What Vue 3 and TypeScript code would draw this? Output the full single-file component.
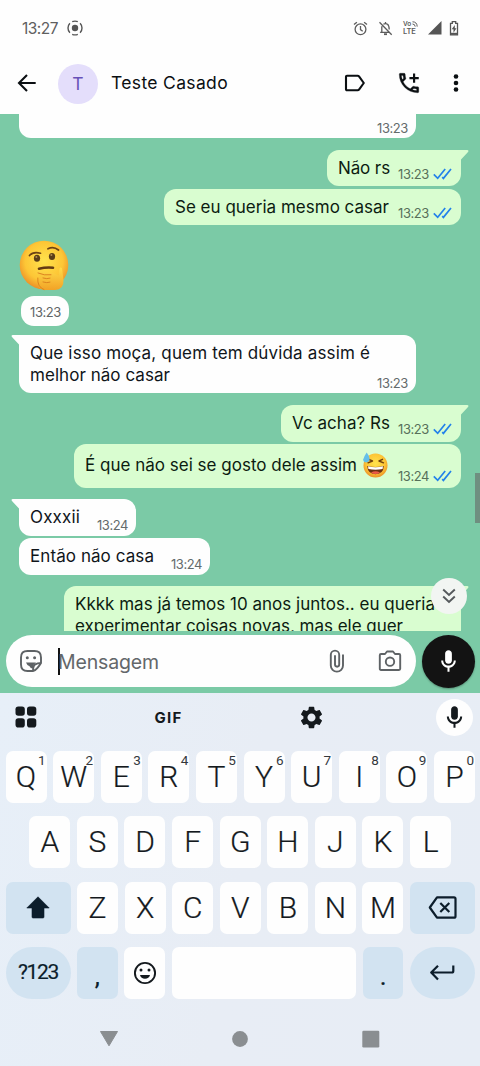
<script setup lang="ts">
interface Line { text: string; width: number }
interface Message {
  side: 'in' | 'out'
  gap: number
  height: number
  width: number
  lines: Line[]
  time?: string
  tail?: boolean
  emoji?: boolean
  padTop: number
  padBottom: number
}

// Tracks a single line of text so that it fills the given width.
const vFit = {
  mounted(el: HTMLElement, binding: { value: number }) {
    const count = (el.textContent ?? '').length
    const natural = el.getBoundingClientRect().width
    el.style.letterSpacing = `${(binding.value - natural) / Math.max(count, 1)}px`
  },
}

const before: Message[] = [
  { side: 'in', gap: 0, height: 24, width: 397, lines: [], time: '13:23', padTop: 0, padBottom: 2 },
  { side: 'out', gap: 12, height: 36, width: 134, lines: [{ text: 'Não rs', width: 52 }], time: '13:23', tail: true, padTop: 7, padBottom: 4 },
  { side: 'out', gap: 3, height: 36, width: 297, lines: [{ text: 'Se eu queria mesmo casar', width: 214 }], time: '13:23', padTop: 7, padBottom: 4 },
]
const after: Message[] = [
  { side: 'in', gap: 9, height: 58, width: 397, lines: [{ text: 'Que isso moça, quem tem dúvida assim é', width: 340 }, { text: 'melhor não casar', width: 140 }], time: '13:23', tail: true, padTop: 7, padBottom: 2 },
  { side: 'out', gap: 12, height: 37, width: 180, lines: [{ text: 'Vc acha? Rs', width: 98 }], time: '13:23', tail: true, padTop: 7, padBottom: 5 },
  { side: 'out', gap: 2, height: 44, width: 387, lines: [{ text: 'É que não sei se gosto dele assim', width: 272 }], time: '13:24', emoji: true, padTop: 10, padBottom: 4 },
  { side: 'in', gap: 11, height: 37, width: 117, lines: [{ text: 'Oxxxii', width: 50 }], time: '13:24', tail: true, padTop: 7, padBottom: 3 },
  { side: 'in', gap: 2, height: 37, width: 191, lines: [{ text: 'Então não casa', width: 124 }], time: '13:24', padTop: 7, padBottom: 3 },
  { side: 'out', gap: 11, height: 90, width: 397, lines: [{ text: 'Kkkk mas já temos 10 anos juntos.. eu queria', width: 360 }, { text: 'experimentar coisas novas, mas ele quer', width: 328 }], tail: true, padTop: 7, padBottom: 4 },
]
const groups = [before, after]

const topRow = 'QWERTYUIOP'.split('').map((label, i) => ({ label, hint: String((i + 1) % 10) }))
const midRow = 'ASDFGHJKL'.split('')
const lowRow = 'ZXCVBNM'.split('')
</script>

<template>
  <div class="phone">
    <div class="status">
      <span class="clock"><span v-fit="36">13:27</span></span>
      <svg class="cast" width="16" height="16" viewBox="0 0 16 16" fill="none" stroke="#555" stroke-width="1.4">
        <circle cx="8" cy="8" r="3.2" fill="#555" stroke="none" />
        <path d="M5.2 1.7A7 7 0 0 1 10.8 1.7M5.2 14.3A7 7 0 0 0 10.8 14.3M2.9 3.2A7 7 0 0 0 2.9 12.8M13.1 3.2A7 7 0 0 1 13.1 12.8" />
      </svg>
      <svg class="alarm" width="15" height="15" viewBox="0 0 15 15" fill="none" stroke="#5c5c5c" stroke-width="1.3">
        <circle cx="7.5" cy="8.3" r="5.4" /><path d="M7.5 5v3.6l2.2 1.6M1 3.6 3.9 1.2M14 3.6 11.1 1.2" />
      </svg>
      <svg class="bell" width="15" height="15" viewBox="0 0 15 15" fill="none" stroke="#5c5c5c" stroke-width="1.3">
        <path d="M1.5 1.2 13.7 13.8M3.8 5.3V11M2.2 11.4h9M5.4 3.2C6.7 2.4 8.3 2.4 9.5 3.2 11 4.2 11.2 5.5 11.2 8.6M7.5 1v2" /><path d="M6 13.2h3" stroke-width="1.8" />
      </svg>
      <div class="volte">
        <div class="vo"><span>Vo</span><svg width="6" height="6" viewBox="0 0 6 6" fill="none" stroke="#5c5c5c" stroke-width="1"><path d="M.5.8Q5 .8 5.2 5.6M.5 3Q3 3 3.2 5.6" /></svg></div>
        <div class="lte">LTE</div>
      </div>
      <svg class="signal" width="14" height="14" viewBox="0 0 14 14"><path d="M13.5 0v13.5H0z" fill="#555" /></svg>
      <svg class="battery" width="10" height="15" viewBox="0 0 10 15"><path d="M1.5 2.3h1.8V.6h3.4v1.7h1.8v11.5h-7z" fill="none" stroke="#555" stroke-width="1.3" /><path d="M5.8 4 2.7 8.3h1.8v3.4l3-4.4H5.8z" fill="#555" /><path d="M1.5 11.8h7v2h-7z" fill="#555" /></svg>
    </div>

    <header class="header">
      <svg class="back" width="20" height="20" viewBox="0 0 20 20" fill="none" stroke="#0b0f12" stroke-width="2.1"><path d="M18.7 10H2.2M10 2 2 10l8 8" /></svg>
      <div class="avatar">T</div>
      <div class="name"><span v-fit="117">Teste Casado</span></div>
      <svg class="label" width="22" height="20" viewBox="0 0 22 20" fill="none" stroke="#0b0f12" stroke-width="2.1" stroke-linejoin="round"><path d="M3 2.8h10.6q1 0 1.6.8l4.6 6.4-4.6 6.4q-.6.8-1.6.8H3q-1 0-1-1V3.8q0-1 1-1z" /></svg>
      <svg class="call" width="26" height="26" viewBox="0 0 24 24" fill="#0b0f12">
        <path d="M6.54 5c.06.89.21 1.76.45 2.59l-1.2 1.2c-.41-1.2-.67-2.47-.76-3.79h1.51m9.86 12.02c.85.24 1.72.39 2.6.45v1.49c-1.32-.09-2.59-.35-3.8-.75l1.2-1.19M7.5 3H4c-.55 0-1 .45-1 1 0 9.39 7.61 17 17 17 .55 0 1-.45 1-1v-3.49c0-.55-.45-1-1-1-1.24 0-2.45-.2-3.57-.57-.1-.04-.21-.05-.31-.05-.26 0-.51.1-.71.29l-2.2 2.2c-2.83-1.45-5.15-3.76-6.59-6.59l2.2-2.2c.28-.28.36-.67.25-1.02C8.7 6.45 8.5 5.25 8.5 4c0-.55-.45-1-1-1z" stroke="#0b0f12" stroke-width=".25" />
        <path d="M15.7 3.2h2v3.3H21v2h-3.3v3.3h-2V8.5h-3.3v-2h3.3z" />
      </svg>
      <svg class="dots" width="6" height="20" viewBox="0 0 6 20" fill="#0b0f12"><circle cx="3" cy="3.5" r="2.3" /><circle cx="3" cy="10" r="2.3" /><circle cx="3" cy="16.5" r="2.3" /></svg>
    </header>

    <main class="chat">
      <template v-for="(group, g) in groups" :key="g">
        <div v-if="g === 1" class="reaction">
          <svg width="50" height="51" viewBox="0 0 50 51">
            <defs>
              <radialGradient id="face" cx=".5" cy=".42" r=".6"><stop offset="0" stop-color="#ffe34d" /><stop offset=".65" stop-color="#fdc636" /><stop offset="1" stop-color="#ea8a26" /></radialGradient>
              <linearGradient id="hand" x1="0" y1="0" x2="0" y2="1"><stop offset="0" stop-color="#ffdc4a" /><stop offset="1" stop-color="#f2a326" /></linearGradient>
            </defs>
            <circle cx="25" cy="25" r="24.3" fill="url(#face)" />
            <g fill="#5b3d18"><ellipse cx="18" cy="18.3" rx="3.1" ry="3.5" /><ellipse cx="33" cy="16.5" rx="3.1" ry="3.5" /></g>
            <circle cx="17.4" cy="17" r="1" fill="#b08a50" /><circle cx="32.4" cy="15" r="1" fill="#b08a50" />
            <path d="M10.500 15.500Q14 11.300 21.500 13.200M29 8.800Q34.500 6 39.500 10" fill="none" stroke="#6c4215" stroke-width="1.7" stroke-linecap="round" />
            <path d="M20 28.700Q27 27 34 27.700" fill="none" stroke="#633b13" stroke-width="2.6" stroke-linecap="round" />
            <path d="M18.500 31.500Q19 30 22 30.600L30 32.500Q34 32 36 34L39.500 35.500 40.500 28.500Q41.500 26.500 43 28.500L44.500 40Q45 49.500 36 50H26Q20 50 19 44L20.500 36.500Q18 34 18.500 31.500z" fill="url(#hand)" />
            <path d="M19 33Q25 35.800 32 34.800M24 38q4 1.300 7 .2M24 42q4 1.300 7 .2M18.800 38Q18 47 25 49.600" fill="none" stroke="#dc8420" stroke-width="1" stroke-linecap="round" />
          </svg>
          <div class="pill"><span v-fit="31">13:23</span></div>
        </div>
        <div
          v-for="(m, i) in group"
          :key="i"
          class="bubble"
          :class="[m.side, { tail: m.tail }]"
          :style="{ marginTop: m.gap + 'px', height: m.height + 'px', width: m.width + 'px', paddingTop: m.padTop + 'px', paddingBottom: m.padBottom + 'px' }"
        >
          <svg v-if="m.tail" class="tip" width="18" height="12" viewBox="0 0 18 12"><path d="M18 0H2Q-.5.3 1.2 2.2L8 9.500V12H18z" fill="currentColor" /></svg>
          <div class="body">
            <div v-for="l in m.lines" :key="l.text" class="line"><span v-fit="l.width">{{ l.text }}</span></div>
          </div>
          <svg v-if="m.emoji" class="grin" width="26" height="26" viewBox="0 0 26 26">
            <circle cx="13.500" cy="13.500" r="12" fill="url(#face)" />
            <path d="M6 10.800 10.500 9 6.800 7.300M20.500 7.300 17 9l4.500 1.800" fill="none" stroke="#70420e" stroke-width="1.400" stroke-linecap="round" stroke-linejoin="round" />
            <path d="M5.200 14Q13.500 15.800 21.800 14 21.500 22 13.500 22.200 5.700 22 5.200 14z" fill="#6b3012" />
            <path d="M6 14.300Q13.500 16 21 14.300L20.600 17Q13.500 18.500 6.400 17z" fill="#fff" />
            <path d="M9 20.500Q13.500 17.800 18 20.500 16 22 13.500 22T9 20.500z" fill="#ed5a46" />
            <path d="M4.700.5Q8.200 5.500 7.500 8 6.800 10.500 4 10.400 1 10 1.300 7.300 1.700 4.800 4.700.5z" fill="#63bfe9" />
          </svg>
          <div v-if="m.time" class="meta">
            <span v-fit="31">{{ m.time }}</span>
            <svg v-if="m.side === 'out'" width="19" height="12" viewBox="0 0 19 12" fill="none" stroke="#2382ea" stroke-width="1.700"><path d="M.8 6.300 4.700 10.300 12.200 1M9.200 9.200l1.200 1.200L18 1" /></svg>
          </div>
        </div>
      </template>
      <div class="scrollbar"></div>
      <div class="jump">
        <svg width="14" height="16" viewBox="0 0 14 16" fill="none" stroke="#55595c" stroke-width="1.9"><path d="M1.2 1.5 7 7l5.800-5.500M1.200 8.500 7 14l5.800-5.500" /></svg>
      </div>
    </main>

    <div class="composer">
      <div class="field">
        <svg class="sticker" width="24" height="24" viewBox="0 0 24 24" fill="none" stroke="#5e6265" stroke-width="1.9">
          <path d="M22 14V8.500Q22 2 15.500 2h-7Q2 2 2 8.500v7Q2 22 8.500 22H14q2-.2 4.500-3.200T22 14zM14 22q0-5.500 2.200-6.700T22 14" />
          <circle cx="8.300" cy="8.800" r="1.500" fill="#5e6265" stroke="none" /><circle cx="15.600" cy="8.800" r="1.500" fill="#5e6265" stroke="none" />
          <path d="M7 13.500h10L14.300 16.300V19.500Q11.500 19.800 10.500 17.300 8 16.500 7 13.500z" fill="#5e6265" stroke="none" />
        </svg>
        <span class="caret"></span>
        <span class="placeholder"><span v-fit="101">Mensagem</span></span>
        <svg class="clip" width="16" height="24" viewBox="0 0 16 24" fill="none" stroke="#5e6265" stroke-width="1.9"><path d="M14 5.500v11a6.100 6.100 0 0 1-12.200 0V5.800a4.200 4.200 0 0 1 8.400 0v9.800a2.100 2.100 0 0 1-4.200 0V6.200" /></svg>
        <svg class="camera" width="24" height="22" viewBox="0 0 24 22" fill="none" stroke="#5e6265" stroke-width="1.9" stroke-linejoin="round"><path d="M3 4h4L9 1.500h6L17 4h4q1.200 0 1.200 1.200v13.600q0 1.200-1.200 1.200H3q-1.200 0-1.200-1.200V5.200Q1.800 4 3 4z" /><circle cx="12" cy="11.700" r="4.200" /></svg>
      </div>
      <div class="record">
        <svg width="27" height="27" viewBox="0 0 24 24" fill="#fff"><path d="M12 14c1.660 0 3-1.340 3-3V5c0-1.660-1.340-3-3-3S9 3.340 9 5v6c0 1.660 1.340 3 3 3z" /><path d="M18.200 11h-1.500c0 2.600-2.100 4.600-4.700 4.600S7.300 13.600 7.300 11H5.500c0 3.300 2.400 6 5.600 6.500V21h1.800v-3.500c3.100-.5 5.600-3.200 5.600-6.500z" /></svg>
      </div>
    </div>

    <section class="keyboard">
      <div class="tools">
        <svg class="apps" width="22" height="22" viewBox="0 0 22 22" fill="#14191d"><rect x=".5" y=".5" width="9.300" height="9.300" rx="2.800" /><rect x="12" y=".5" width="9.300" height="9.300" rx="2.800" /><rect x=".5" y="12.200" width="9.300" height="9.300" rx="2.800" /><rect x="12" y="12.200" width="9.300" height="9.300" rx="2.800" /></svg>
        <span class="gif"><span v-fit="28">GIF</span></span>
        <svg class="gear" width="27" height="27" viewBox="0 0 24 24" fill="#14191d"><path d="M19.140 12.940c.04-.3.06-.61.06-.94 0-.32-.02-.64-.07-.94l2.030-1.580c.18-.14.23-.41.12-.61l-1.920-3.320c-.12-.22-.37-.29-.59-.22l-2.390.96c-.5-.38-1.030-.7-1.620-.94l-.36-2.540c-.04-.24-.24-.41-.48-.41h-3.840c-.24 0-.43.17-.47.41l-.36 2.540c-.59.24-1.130.57-1.620.94l-2.390-.96c-.22-.08-.47 0-.59.22L2.740 8.870c-.12.21-.08.47.12.61l2.030 1.580c-.05.3-.09.63-.09.94s.02.64.07.94l-2.030 1.580c-.18.14-.23.41-.12.61l1.920 3.320c.12.22.37.29.59.22l2.390-.96c.5.38 1.030.7 1.620.94l.36 2.540c.05.24.24.41.48.41h3.840c.24 0 .44-.17.47-.41l.36-2.540c.59-.24 1.130-.56 1.620-.94l2.390.96c.22.08.47 0 .59-.22l1.920-3.320c.12-.22.07-.47-.12-.61l-2.010-1.580zM12 15.600c-1.980 0-3.600-1.620-3.600-3.600s1.620-3.600 3.600-3.600 3.600 1.620 3.600 3.600-1.620 3.600-3.600 3.600z" /></svg>
        <div class="voice">
          <svg width="27" height="27" viewBox="0 0 24 24" fill="#14191d"><path d="M12 14c1.660 0 3-1.340 3-3V5c0-1.660-1.340-3-3-3S9 3.340 9 5v6c0 1.660 1.340 3 3 3z" /><path d="M18.700 11H17c0 2.700-2.200 4.800-5 4.800S7 13.700 7 11H5.200c0 3.400 2.600 6.200 5.900 6.700V21h1.800v-3.300c3.300-.5 5.900-3.300 5.900-6.700z" /></svg>
        </div>
      </div>
      <div class="keys">
        <div class="row">
          <div v-for="k in topRow" :key="k.label" class="key">{{ k.label }}<sup>{{ k.hint }}</sup></div>
        </div>
        <div class="row inset">
          <div v-for="k in midRow" :key="k" class="key">{{ k }}</div>
        </div>
        <div class="row">
          <div class="key wide tint">
            <svg width="24" height="23" viewBox="0 0 24 23"><path d="M12 .8 23.200 12H18v9q0 1-1 1H7q-1 0-1-1v-9H.8z" fill="#0c1d2b" stroke="#0c1d2b" stroke-width=".6" stroke-linejoin="round" /></svg>
          </div>
          <div v-for="k in lowRow" :key="k" class="key">{{ k }}</div>
          <div class="key wide tint">
            <svg width="30" height="26" viewBox="0 0 30 26" fill="none" stroke="#0c1d2b" stroke-width="2.200" stroke-linejoin="round"><path d="M9 2.300h17q1.500 0 1.500 1.500v17.400q0 1.500-1.500 1.500H9L1.800 12.500z" /><path d="m12.300 8 9 9M21.300 8l-9 9" /></svg>
          </div>
        </div>
        <div class="row">
          <div class="key wide tint round"><span class="sym"><span v-fit="40">?123</span></span></div>
          <div class="key tint punct">,</div>
          <div class="key">
            <svg width="24" height="24" viewBox="0 0 24 24" fill="none" stroke="#14191d" stroke-width="1.900"><circle cx="12" cy="12" r="10.100" /><circle cx="8" cy="9" r="1.500" fill="#14191d" stroke="none" /><circle cx="16" cy="9" r="1.500" fill="#14191d" stroke="none" /><path d="M7 14h10q-1 3.800-5 3.800t-5-3.800z" fill="#14191d" stroke="none" /></svg>
          </div>
          <div class="key space"></div>
          <div class="key tint punct">.</div>
          <div class="key wide tint round">
            <svg width="26" height="18" viewBox="0 0 26 18" fill="none" stroke="#0c1d2b" stroke-width="2.200" stroke-linejoin="round"><path d="M24.300 1.500v5.500q0 1.500-1.500 1.500H2.300M9 1.800 2.200 8.500 9 15.500" /></svg>
          </div>
        </div>
      </div>
      <nav class="nav">
        <svg width="20" height="18" viewBox="0 0 20 18"><path d="M1.500 1.500h17L10 15.800z" fill="#8a8e91" stroke="#8a8e91" stroke-linejoin="round" /></svg>
        <svg width="20" height="18" viewBox="0 0 20 18"><circle cx="10" cy="9" r="7.900" fill="#8a8e91" /></svg>
        <svg width="20" height="18" viewBox="0 0 20 18"><rect x="1.300" y=".7" width="17" height="16.800" rx="1.200" fill="#8a8e91" /></svg>
      </nav>
    </section>
  </div>
</template>

<style>
html, body { margin: 0; background: #fff; }
</style>

<style scoped>
* { box-sizing: border-box; }
svg { display: block; flex: none; }
.phone { width: 480px; height: 1066px; overflow: hidden; display: flex; flex-direction: column; background: #fefefe; font-family: Inter, "Liberation Sans", sans-serif; white-space: nowrap; }
.status { height: 53px; padding: 3px 0 0 22px; display: flex; align-items: center; flex: none; }
.clock { width: 45px; font-size: 15.5px; color: #5f5f5f; }
.cast { margin-right: 270px; }
.alarm { margin-right: 10px; }
.bell { margin-right: 10px; }
.volte { width: 25px; font-size: 7.5px; font-weight: 600; color: #5c5c5c; letter-spacing: -.1px; }
.vo { height: 6px; line-height: 6px; display: flex; gap: 1px; align-items: center; }
.vo span { font-size: 6.5px; }
.lte { height: 9px; line-height: 10px; }
.signal { margin-right: 7px; }
.header { height: 61px; flex: none; padding: 0 0 2px 17px; display: flex; align-items: center; }
.back { margin-right: 21px; }
.avatar { width: 40px; height: 40px; margin-top: 2px; border-radius: 50%; background: #e4defb; color: #6750b8; display: flex; align-items: center; justify-content: center; font-size: 17.5px; flex: none; margin-right: 13px; }
.name { width: 233px; color: #0b0f12; font-size: 17.5px; }
.label { margin-right: 30px; }
.call { margin-right: 30.5px; }
.chat { position: relative; height: 517px; flex: none; overflow: hidden; background: #7bcaa6; padding: 0 19px; display: flex; flex-direction: column; }
.bubble { position: relative; flex: none; display: flex; justify-content: space-between; padding-left: 11px; padding-right: 9px; border-radius: 12px; color: #10151a; }
.in { background: #fefefe; align-self: flex-start; }
.out { background: #d9fdd0; align-self: flex-end; color: #0c1c10; }
.bubble:first-child { border-top-left-radius: 0; border-top-right-radius: 0; }
.in.tail { border-top-left-radius: 0; }
.out.tail { border-top-right-radius: 0; }
.tip { position: absolute; top: 0; left: -8px; color: #fefefe; }
.out .tip { left: auto; right: -8px; transform: scaleX(-1); color: #d9fdd0; }
.body { flex: 1; width: 0; }
.line { height: 22px; line-height: 22px; font-size: 17px; }
.grin { margin: -2px 10px 0 0; }
.meta { align-self: flex-end; height: 16px; line-height: 16px; font-size: 13px; color: #646b6c; display: flex; gap: 4px; }
.in .meta { margin-right: -1px; }
.out .meta { color: #57705a; }
.meta svg { margin-top: 2px; }
.reaction { margin-top: 15px; height: 86px; display: flex; flex-direction: column; justify-content: space-between; flex: none; }
.pill { margin-left: 2px; width: 48px; height: 30px; border-radius: 13px; background: #fefefe; color: #5f6566; font-size: 13px; line-height: 32px; padding-left: 9px; }
.scrollbar { position: absolute; right: 0; top: 359px; width: 5px; height: 50px; background: #6f8f80; }
.jump { position: absolute; left: 431px; top: 464px; width: 36px; height: 36px; border-radius: 50%; background: #f2f5f2; display: flex; align-items: center; justify-content: center; }
.composer { height: 62px; flex: none; background: #7bcaa6; display: flex; padding: 4px 5px 0 6px; gap: 6px; }
.field { width: 410px; height: 52px; border-radius: 26px; background: #fefefe; display: flex; align-items: center; padding-left: 13px; }
.sticker { margin-right: 15px; }
.caret { width: 2px; height: 27px; background: #111; }
.placeholder { width: 271px; margin-left: -2px; padding-top: 1px; font-size: 19.5px; color: #63676a; }
.clip { margin-right: 33px; }
.record { width: 53px; height: 53px; border-radius: 50%; background: #131313; display: flex; align-items: center; justify-content: center; box-shadow: 0 1px 2px rgba(0, 0, 0, .3); }
.keyboard { flex: 1; background: linear-gradient(100deg, #e7eff8, #e8edf5 50%, #e7edf5); }
.tools { height: 58px; display: flex; align-items: center; padding: 0 7px 10px 14.5px; }
.apps { margin-right: 118px; }
.gif { width: 143px; font-size: 15px; font-weight: 700; color: #14191d; }
.voice { width: 37px; height: 37px; border-radius: 50%; background: #fefefe; display: flex; align-items: center; justify-content: center; margin-left: 111px; }
.keys { padding: 0 5px 0 5.5px; display: flex; flex-direction: column; gap: 13.3px; }
.row { display: flex; gap: 6.6px; height: 52px; }
.inset { padding: 0 24px 0 23.8px; }
.key { position: relative; flex: 1; border-radius: 7px; background: #fefefe; color: #14191d; font: 300 30px/1 Roboto, "Liberation Sans", sans-serif; -webkit-text-stroke: .2px currentColor; display: flex; align-items: center; justify-content: center; }
.key sup { position: absolute; right: 1px; top: 2px; font-size: 13.5px; font-weight: 400; line-height: 14px; color: #33383c; -webkit-text-stroke: 0; }
.wide { flex: none; width: 65px; }
.tint { background: #d2e3f1; color: #0c1d2b; }
.round { border-radius: 26px; }
.space { flex: none; width: 184.5px; }
.punct { font-size: 26px; font-weight: 400; padding-top: 7px; }
.sym { font-size: 21px; font-weight: 400; }
.nav { height: 80px; display: flex; justify-content: space-between; padding: 31px 99px 0 99px; }
</style>
